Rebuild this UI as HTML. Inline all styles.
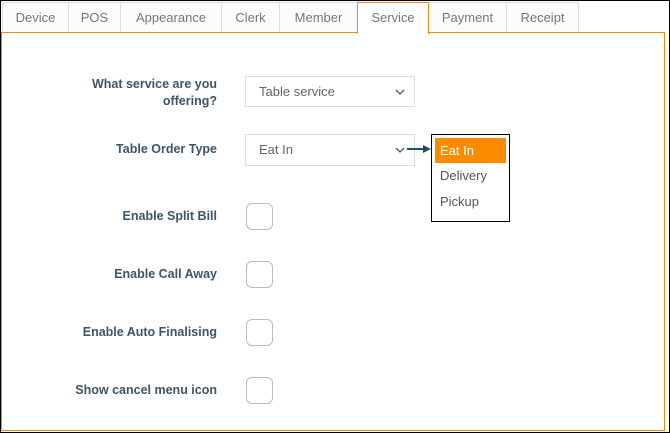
<!DOCTYPE html>
<html><head><style>
body{margin:0;width:670px;height:433px;position:relative;font-family:"Liberation Sans",sans-serif;background:#fff;overflow:hidden}
.frame{position:absolute;left:0;top:0;width:668px;height:431px;border:1px solid #000}
.panel{position:absolute;left:1px;top:32px;width:662px;height:397px;border:1px solid #f28c0f}
.tab{position:absolute;top:2px;height:30px;border:1px solid #ddd;border-bottom:none;box-sizing:border-box;background:#fcfcfc;color:#777;font-size:13px;line-height:30px;text-align:center}
.tab.act{background:#fff;border:1px solid #f28c0f;border-bottom:none;height:32px;z-index:2}
.lbl{position:absolute;right:453px;color:#3d5566;font-size:12.5px;font-weight:bold;text-align:right;line-height:17px}
.sel{position:absolute;left:245px;width:170px;height:31px;border:1px solid #ddd;box-sizing:border-box;color:#666;font-size:13px;line-height:29px;padding-left:13px}
.sel svg{position:absolute;right:9px;top:12px}
.cb{position:absolute;left:246px;width:27px;height:27px;border:1px solid #bbb;border-radius:6px;box-sizing:border-box}
.dd{position:absolute;left:431px;top:134px;width:79px;height:88px;border:1px solid #000;box-sizing:border-box;font-size:13px;color:#555}
.dd div{height:26px;line-height:26px;padding-left:5px;margin:0 3px}
</style></head><body>
<div class="frame"></div>
<div class="panel"></div>
<div class="tab" style="left:2px;width:67px">Device</div>
<div class="tab" style="left:68px;width:53px">POS</div>
<div class="tab" style="left:120px;width:102px">Appearance</div>
<div class="tab" style="left:221px;width:59px">Clerk</div>
<div class="tab" style="left:279px;width:79px">Member</div>
<div class="tab act" style="left:357px;width:72px">Service</div>
<div class="tab" style="left:428px;width:79px">Payment</div>
<div class="tab" style="left:506px;width:73px">Receipt</div>

<div class="lbl" style="top:76px">What service are you<br>offering?</div>
<div class="sel" style="top:76px">Table service<svg width="10" height="7"><path d="M1 1l4 4 4-4" fill="none" stroke="#555" stroke-width="1.3"/></svg></div>
<div class="lbl" style="top:141px">Table Order Type</div>
<div class="sel" style="top:134px;height:32px">Eat In<svg width="10" height="7"><path d="M1 1l4 4 4-4" fill="none" stroke="#555" stroke-width="1.3"/></svg></div>
<svg style="position:absolute;left:407px;top:144px" width="25" height="10"><path d="M0 5H18" stroke="#1f4e6b" stroke-width="2"/><path d="M16 1L24 5 16 9Z" fill="#1f4e6b"/></svg>
<div class="dd"><div style="background:#fb8c00;color:#fff;margin-top:3px;height:25px;line-height:25px">Eat In</div><div>Delivery</div><div>Pickup</div></div>

<div class="lbl" style="top:208px">Enable Split Bill</div><div class="cb" style="top:203px"></div>
<div class="lbl" style="top:266px">Enable Call Away</div><div class="cb" style="top:261px"></div>
<div class="lbl" style="top:324px">Enable Auto Finalising</div><div class="cb" style="top:319px"></div>
<div class="lbl" style="top:382px">Show cancel menu icon</div><div class="cb" style="top:377px"></div>
</body></html>
